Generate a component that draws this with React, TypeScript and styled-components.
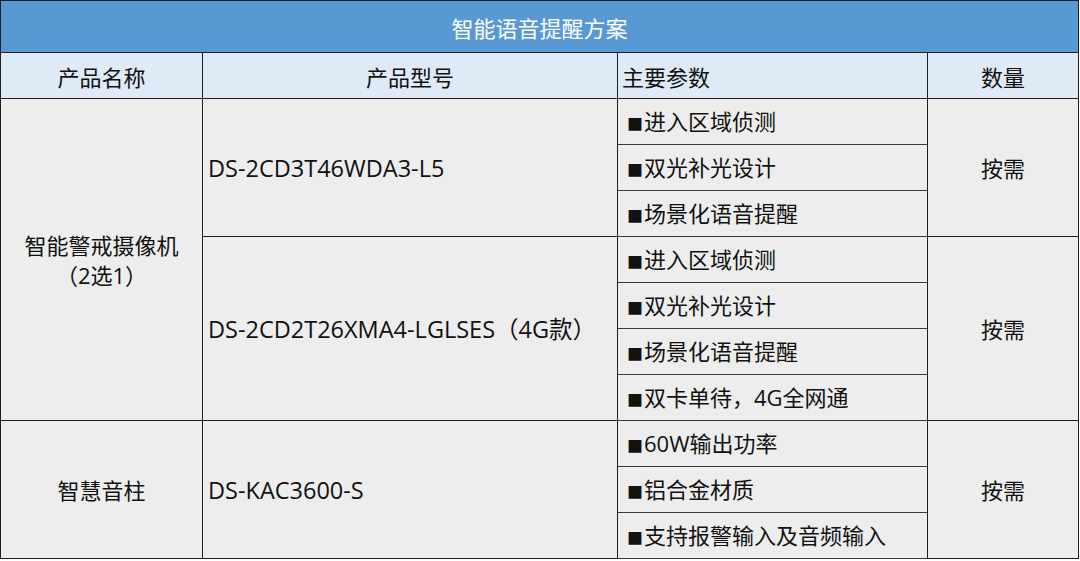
import React from 'react'
import styled, { createGlobalStyle } from 'styled-components'

const GlobalStyle = createGlobalStyle`
  body {
    margin: 0;
    background: #ffffff;
    font-family: 'Open Sans', 'Noto Sans CJK SC', sans-serif;
  }
`

const Table = styled.table`
  width: 1079px;
  border-collapse: collapse;
  table-layout: fixed;
  border: 1px solid #1e1e1e;
  font-size: 22px;
  color: #111111;
`

const TitleCell = styled.th`
  height: 51px;
  padding: 0;
  background: #5899d5;
  color: #ffffff;
  font-weight: normal;
  text-align: center;
  border: 1px solid #1e1e1e;
`

const HeadCell = styled.th<{ align?: string }>`
  height: 45px;
  padding: 0 4px;
  background: #deeaf6;
  font-weight: normal;
  text-align: ${({ align }) => align ?? 'center'};
  border: 1px solid #1e1e1e;
`

const Cell = styled.td<{ align?: string }>`
  height: 45px;
  padding: 0 5px;
  background: #ededed;
  text-align: ${({ align }) => align ?? 'center'};
  vertical-align: middle;
  border: 1px solid #1e1e1e;
  line-height: 30px;
`

const ModelCell = styled(Cell)`
  font-size: 23.5px;
`

const ParamCell = styled(Cell)`
  padding-left: 9px;
  border-top-color: #3a3a3a;
  border-bottom-color: #3a3a3a;
`

const Bullet = styled.span`
  font-family: 'Noto Sans CJK SC', sans-serif;
  font-size: 16px;
  margin-right: 1px;
`

interface Group {
  name: React.ReactNode
  models: { model: string; params: string[] }[]
}

const groups: Group[] = [
  {
    name: (
      <>
        智能警戒摄像机
        <br />
        （2选1）
      </>
    ),
    models: [
      { model: 'DS-2CD3T46WDA3-L5', params: ['进入区域侦测', '双光补光设计', '场景化语音提醒'] },
      {
        model: 'DS-2CD2T26XMA4-LGLSES（4G款）',
        params: ['进入区域侦测', '双光补光设计', '场景化语音提醒', '双卡单待，4G全网通']
      }
    ]
  },
  {
    name: '智慧音柱',
    models: [{ model: 'DS-KAC3600-S', params: ['60W输出功率', '铝合金材质', '支持报警输入及音频输入'] }]
  }
]

export default function App() {
  return (
    <>
      <GlobalStyle />
      <Table>
        <colgroup>
          <col style={{ width: 202 }} />
          <col style={{ width: 415 }} />
          <col style={{ width: 310 }} />
          <col />
        </colgroup>
        <thead>
          <tr>
            <TitleCell colSpan={4}>智能语音提醒方案</TitleCell>
          </tr>
          <tr>
            <HeadCell>产品名称</HeadCell>
            <HeadCell>产品型号</HeadCell>
            <HeadCell align="left">主要参数</HeadCell>
            <HeadCell>数量</HeadCell>
          </tr>
        </thead>
        <tbody>
          {groups.map((g, gi) => {
            const total = g.models.reduce((n, m) => n + m.params.length, 0)
            return g.models.map((m, mi) =>
              m.params.map((p, pi) => (
                <tr key={`${gi}-${mi}-${pi}`}>
                  {mi === 0 && pi === 0 && <Cell rowSpan={total}>{g.name}</Cell>}
                  {pi === 0 && (
                    <ModelCell rowSpan={m.params.length} align="left">
                      {m.model}
                    </ModelCell>
                  )}
                  <ParamCell align="left">
                    <Bullet>■</Bullet>
                    {p}
                  </ParamCell>
                  {pi === 0 && <Cell rowSpan={m.params.length}>按需</Cell>}
                </tr>
              ))
            )
          })}
        </tbody>
      </Table>
    </>
  )
}
